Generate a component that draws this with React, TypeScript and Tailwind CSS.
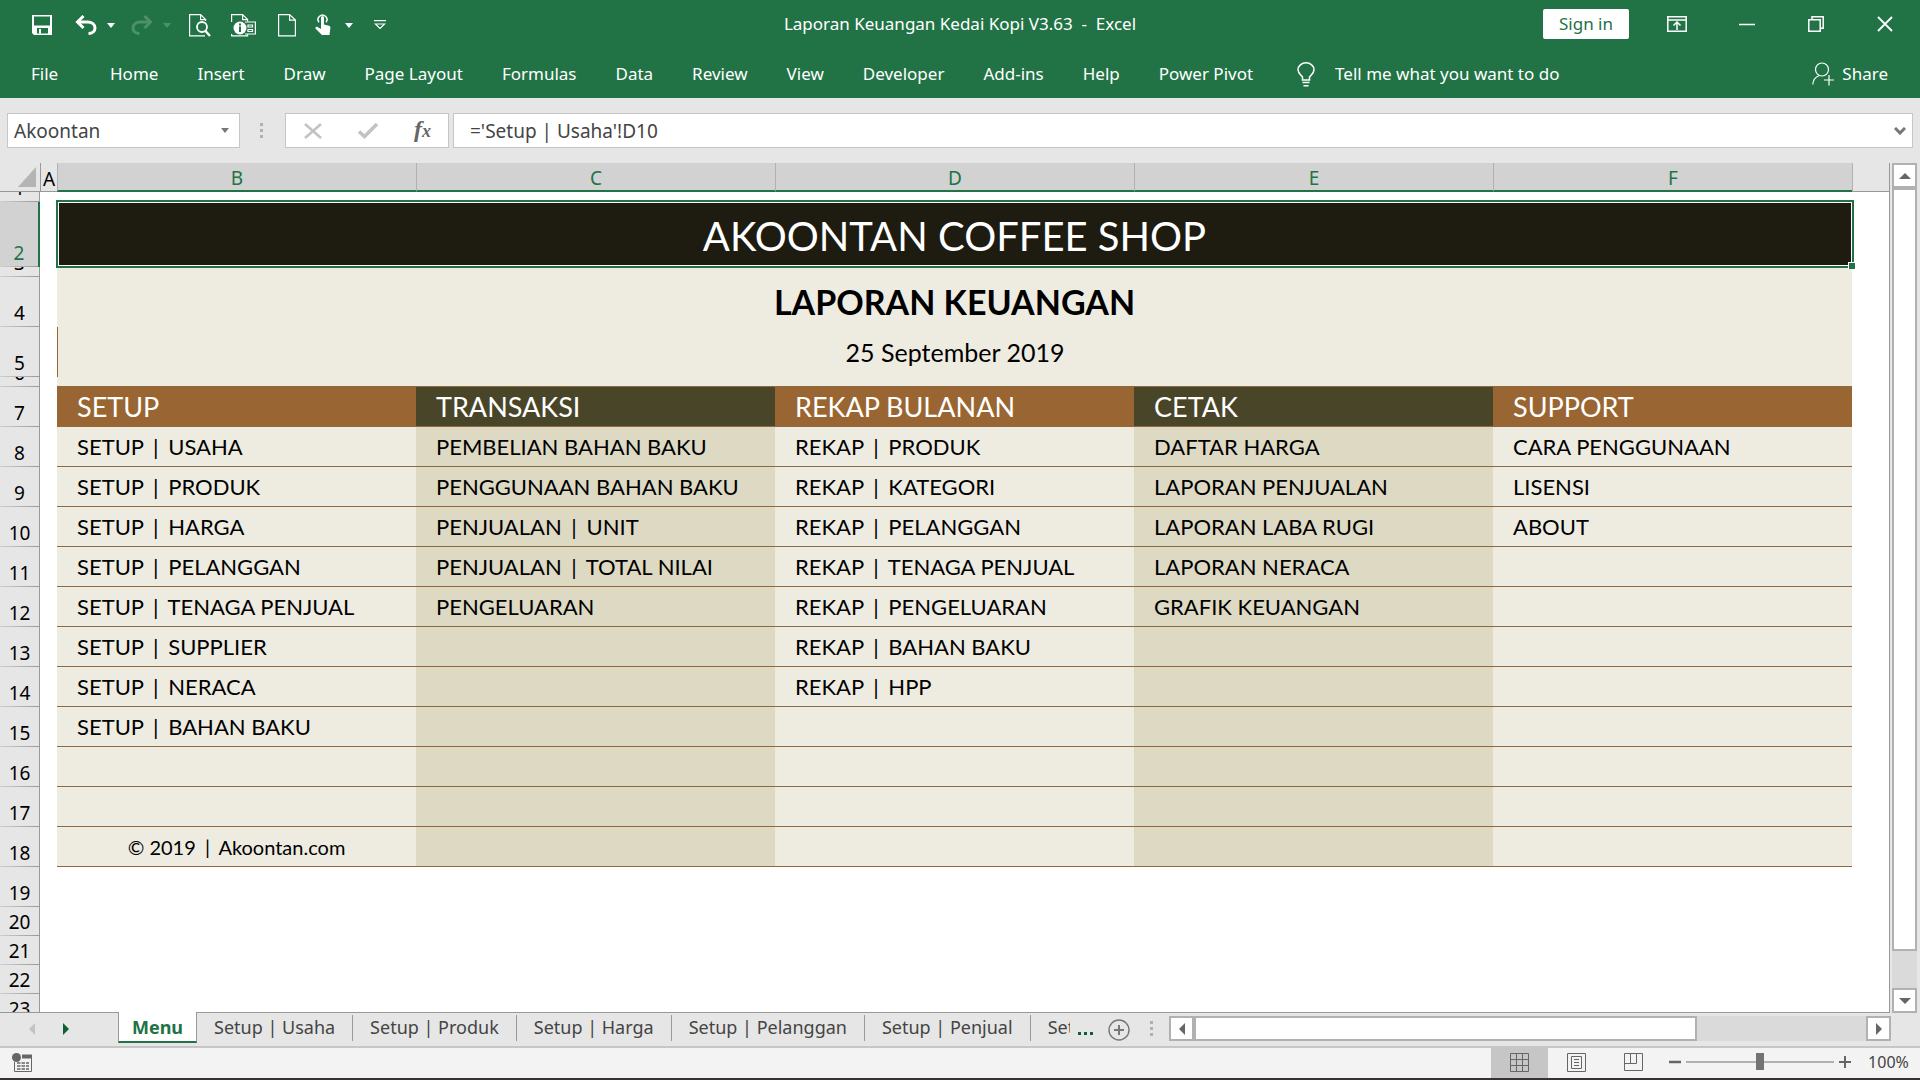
import type { ReactNode } from 'react';

const RIBBON_TABS = [
  'Home',
  'Insert',
  'Draw',
  'Page Layout',
  'Formulas',
  'Data',
  'Review',
  'View',
  'Developer',
  'Add-ins',
  'Help',
  'Power Pivot',
];

const COLUMNS = ['B', 'C', 'D', 'E', 'F'];

const MENU = [
  {
    title: 'SETUP',
    items: [
      'SETUP | USAHA',
      'SETUP | PRODUK',
      'SETUP | HARGA',
      'SETUP | PELANGGAN',
      'SETUP | TENAGA PENJUAL',
      'SETUP | SUPPLIER',
      'SETUP | NERACA',
      'SETUP | BAHAN BAKU',
    ],
  },
  {
    title: 'TRANSAKSI',
    items: [
      'PEMBELIAN BAHAN BAKU',
      'PENGGUNAAN BAHAN BAKU',
      'PENJUALAN | UNIT',
      'PENJUALAN | TOTAL NILAI',
      'PENGELUARAN',
    ],
  },
  {
    title: 'REKAP BULANAN',
    items: [
      'REKAP | PRODUK',
      'REKAP | KATEGORI',
      'REKAP | PELANGGAN',
      'REKAP | TENAGA PENJUAL',
      'REKAP | PENGELUARAN',
      'REKAP | BAHAN BAKU',
      'REKAP | HPP',
    ],
  },
  {
    title: 'CETAK',
    items: ['DAFTAR HARGA', 'LAPORAN PENJUALAN', 'LAPORAN LABA RUGI', 'LAPORAN NERACA', 'GRAFIK KEUANGAN'],
  },
  { title: 'SUPPORT', items: ['CARA PENGGUNAAN', 'LISENSI', 'ABOUT'] },
];

const MENU_ROWS = [8, 9, 10, 11, 12, 13, 14, 15, 16, 17, 18];

const SHEETS = ['Setup | Usaha', 'Setup | Produk', 'Setup | Harga', 'Setup | Pelanggan', 'Setup | Penjual'];

function Caret() {
  return (
    <svg viewBox="0 0 8 5" className="h-[5px] w-2" fill="currentColor">
      <path d="M0 0h8L4 5z" />
    </svg>
  );
}

function QuickAccess() {
  return (
    <div className="flex items-center gap-4 pt-0.5 pl-8">
      <button aria-label="Save" className="flex w-[27px]">
        <svg viewBox="0 0 20 20" className="size-5">
          <path d="M0 0h20v20H2l-2-2z" fill="currentColor" />
          <path d="M2 1.500h16v9H2z" fill="#217346" />
          <path d="M5 13h11v5.500H5z" fill="#217346" />
          <path d="M7 14h2v4.500H7z" fill="currentColor" />
        </svg>
      </button>
      <div className="flex items-center gap-2.5">
        <button aria-label="Undo">
          <svg viewBox="0 0 22 20" className="h-5 w-[22px]" fill="none" stroke="currentColor" strokeWidth="3">
            <path d="M2.500 7h10c4.500 0 7.500 2.500 7.500 6 0 3-2.500 5.500-6.500 5.500" />
            <path d="M8.500 1L2.500 7l6 6" />
          </svg>
        </button>
        <button aria-label="Undo history">
          <Caret />
        </button>
      </div>
      <div className="flex items-center gap-2.5 text-[#4d9069]">
        <button aria-label="Redo">
          <svg viewBox="0 0 22 20" className="h-5 w-[22px]" fill="none" stroke="currentColor" strokeWidth="3">
            <path d="M19.500 7h-10C5 7 2 9.500 2 13c0 3 2.500 5.500 6.500 5.500" />
            <path d="M13.500 1l6 6-6 6" />
          </svg>
        </button>
        <button aria-label="Redo history">
          <Caret />
        </button>
      </div>
      <button aria-label="Print preview" className="flex w-[25px] justify-center">
        <svg viewBox="0 0 22 23" className="h-[23px] w-[22px]" fill="none" stroke="currentColor" strokeWidth="1.200">
          <path d="M16 21.800H.600V.600h11l5 5V7M11.600.600v5h5" />
          <circle cx="13" cy="13" r="5" strokeWidth="1.800" />
          <path d="M16.500 17l4.500 5" strokeWidth="2.400" />
        </svg>
      </button>
      <button aria-label="Document info" className="flex w-[30px] justify-center">
        <svg viewBox="0 0 25 23" className="h-[23px] w-[25px]" fill="none" stroke="currentColor" strokeWidth="1.200">
          <path d="M.600 8V.600h11l5 5v2M11.600.600v5h5M.600 20v1.800h16v-1.500" />
          <path d="M14 8h10.400v12H14" />
          <path d="M17 11h4.500v2H17zM17 15.500h4.500v2H17z" />
          <circle cx="9" cy="14" r="6.500" fill="currentColor" stroke="none" />
          <path d="M9 9.500v2M9 12.500v5.500" stroke="#217346" strokeWidth="2" />
        </svg>
      </button>
      <button aria-label="New" className="flex w-[25px] justify-center">
        <svg viewBox="0 0 18 23" className="h-[23px] w-[18px]" fill="none" stroke="currentColor" strokeWidth="1.200">
          <path d="M.600.600h11l5.800 5.500v15.700H.600zM11.600.600v5.500h5.800" />
        </svg>
      </button>
      <div className="flex items-center gap-2.5">
        <button aria-label="Touch mode" className="flex w-5">
          <svg viewBox="0 0 16 22" className="h-[22px] w-4">
            <path
              d="M6 3.500a1.500 1.500 0 0 1 3 0v7l5 1.300c1 .3 1.500 1 1.400 2L14.500 21H7L.700 14.800c-1-1.200.5-2.600 1.900-1.900L6 15z"
              fill="currentColor"
            />
            <path d="M4 8.200a4.400 4.400 0 1 1 7 0" fill="none" stroke="currentColor" strokeWidth="1.500" />
          </svg>
        </button>
        <button aria-label="Touch mode options">
          <Caret />
        </button>
      </div>
      <button aria-label="Customize quick access toolbar" className="flex w-[22px] justify-center">
        <svg viewBox="0 0 12 10" className="h-2.5 w-3" fill="none" stroke="currentColor" strokeWidth="1.200">
          <path d="M0 .600h12M1.500 4h9L6 8.500z" />
        </svg>
      </button>
    </div>
  );
}

function WindowControls() {
  return (
    <div className="flex items-center justify-end">
      <button className="mr-[38px] h-[30px] w-[86px] rounded-xs bg-white text-[17px] leading-6 text-[#217346]">
        Sign in
      </button>
      <button aria-label="Ribbon display options" className="mr-[52px]">
        <svg viewBox="0 0 20 16" className="h-4 w-5" fill="none" stroke="currentColor" strokeWidth="1.500">
          <path d="M.800.800h18.400v14.400H.800zM.800 4h18.400M10 14V6.500M6.500 9.500L10 6l3.500 3.500" />
        </svg>
      </button>
      <button aria-label="Minimize" className="mr-[53px]">
        <svg viewBox="0 0 16 16" className="size-4" stroke="currentColor" strokeWidth="1.500">
          <path d="M0 8.500h16" />
        </svg>
      </button>
      <button aria-label="Restore" className="mr-[53px]">
        <svg viewBox="0 0 16 16" className="size-4" fill="none" stroke="currentColor" strokeWidth="1.500">
          <path d="M.800 3.800h11.400v11.400H.800zM4 3.500V.800h11.200v11.400h-2.700" />
        </svg>
      </button>
      <button aria-label="Close" className="mr-[27px]">
        <svg viewBox="0 0 16 16" className="size-4" stroke="currentColor" strokeWidth="1.800">
          <path d="M1 1l14 14M15 1L1 15" />
        </svg>
      </button>
    </div>
  );
}

function Ribbon() {
  return (
    <nav className="flex h-[50px] items-center pt-0.5 text-[17px] leading-6">
      <button className="w-[110px] pl-[31px] text-left">File</button>
      <div className="flex gap-[39px]">
        {RIBBON_TABS.map((tab) => (
          <button key={tab} className="whitespace-nowrap">
            {tab}
          </button>
        ))}
      </div>
      <label className="ml-11 flex items-center gap-5">
        <svg viewBox="0 0 18 25" className="h-[25px] w-[18px]" fill="none" stroke="currentColor" strokeWidth="1.500">
          <path d="M5.500 18v-3C3.500 12.500 1 11 1 7.800a8 7 0 0 1 16 0c0 3.200-2.500 4.700-4.500 7.200v3zM5.500 20.500h7M6.500 23.800h5" />
        </svg>
        <input
          aria-label="Tell me what you want to do"
          placeholder="Tell me what you want to do"
          className="w-64 bg-transparent outline-none placeholder:text-white"
        />
      </label>
      <button className="mr-8 ml-auto flex items-center gap-2">
        <svg viewBox="0 0 22 24" className="h-6 w-[22px]" fill="none" stroke="currentColor" strokeWidth="1.200">
          <ellipse cx="10" cy="7.500" rx="6.500" ry="6.500" />
          <path d="M.800 22.500C1 18 3.500 15 7 13.700M12 18h10M17 13v10.500" />
        </svg>
        Share
      </button>
    </nav>
  );
}

function Grip() {
  return (
    <div className="flex flex-col gap-[3px]">
      <span className="size-[3px] bg-[#b0b0b0]" />
      <span className="size-[3px] bg-[#b0b0b0]" />
      <span className="size-[3px] bg-[#b0b0b0]" />
    </div>
  );
}

function FormulaBar() {
  return (
    <div className="flex h-[65px] items-center bg-[#e6e6e6] px-[7px] text-[19px] leading-6 text-[#444]">
      <div className="flex h-[35px] w-[233px] items-center border border-[#c6c6c6] bg-white pr-2.5">
        <input aria-label="Name box" defaultValue="Akoontan" className="min-w-0 flex-1 pl-1.5 outline-none" />
        <button aria-label="Name list" className="text-[#777]">
          <Caret />
        </button>
      </div>
      <div className="flex w-[45px] justify-center pr-[3px]">
        <Grip />
      </div>
      <div className="flex h-[35px] w-[164px] items-center gap-9 border border-[#c6c6c6] bg-white pl-[18px]">
        <button aria-label="Cancel" className="text-[#c3c3c3]">
          <svg viewBox="0 0 18 16" className="h-4 w-[18px]" stroke="currentColor" strokeWidth="2.600">
            <path d="M1 1l16 14M17 1L1 15" />
          </svg>
        </button>
        <button aria-label="Enter" className="text-[#c3c3c3]">
          <svg viewBox="0 0 20 16" className="h-4 w-5" fill="none" stroke="currentColor" strokeWidth="3.500">
            <path d="M1 8.500l5.500 5L19 1" />
          </svg>
        </button>
        <button
          aria-label="Insert function"
          className="font-['Liberation_Serif',serif] text-2xl leading-6 font-bold text-[#666] italic"
        >
          f<span className="text-lg">x</span>
        </button>
      </div>
      <div className="ml-1 flex h-[35px] flex-1 items-center border border-[#c6c6c6] bg-white pr-1.5">
        <input
          aria-label="Formula"
          defaultValue="='Setup | Usaha'!D10"
          className="min-w-0 flex-1 pl-4 outline-none"
        />
        <button aria-label="Expand formula bar" className="text-[#777]">
          <svg viewBox="0 0 12 8" className="h-2 w-3" fill="none" stroke="currentColor" strokeWidth="3">
            <path d="M1 1l5 5 5-5" />
          </svg>
        </button>
      </div>
    </div>
  );
}

function RowHeader({ n, height, active }: { n: number; height: string; active?: boolean }) {
  return (
    <th
      scope="row"
      className={`p-0 font-normal ${
        active
          ? 'border-r-2 border-[#217346] bg-[#d2d2d2] text-[#217346]'
          : 'border-r border-[#999] bg-[#e6e6e6] text-black'
      }`}
    >
      <div className={`flex flex-col items-center justify-end overflow-hidden ${height}`}>
        <span className="flex-none font-['Noto_Sans',sans-serif] text-[19px] leading-[26px]">{n}</span>
        <span className="h-px w-full flex-none bg-linear-to-r from-[#cfcfcf] to-[#999]" />
      </div>
    </th>
  );
}

// the bar between group and page name has some air on both sides
function PipedText({ text }: { text: string }) {
  const [before, after] = text.split('|');
  if (after === undefined) return <>{text}</>;
  return (
    <>
      {before}
      <span className="mx-1">|</span>
      {after}
    </>
  );
}

function Sheet() {
  return (
    <div className="min-w-0 flex-1 overflow-hidden border-r border-b border-[#999] bg-white">
      <table className="w-full table-fixed border-separate border-spacing-0 text-left">
        <colgroup>
          <col className="w-10" />
          <col className="w-[17px]" />
          {COLUMNS.map((c) => (
            <col key={c} />
          ))}
          <col className="w-[37px]" />
        </colgroup>
        <thead>
          <tr className="h-[29px] bg-[#e6e6e6] text-center text-[19px] leading-6">
            <th className="border-b border-[#999] p-0">
              <svg viewBox="0 0 18 20" className="ml-[18px] h-5 w-[18px]" fill="#b4b4b4">
                <path d="M18 0v20H0z" />
              </svg>
            </th>
            <th scope="col" className="overflow-hidden border-b border-l border-[#999] p-0 pt-[3px] font-normal">
              A
            </th>
            {COLUMNS.map((c) => (
              <th
                key={c}
                scope="col"
                className="border-b-2 border-l border-b-[#217346] border-l-[#b1b1b1] bg-[#d2d2d2] p-0 pt-[3px] text-center font-normal text-[#217346]"
              >
                {c}
              </th>
            ))}
            <th className="border-b border-l border-b-[#999] border-l-[#b1b1b1] p-0" />
          </tr>
        </thead>
        <tbody className="font-[Lato,sans-serif]">
          <tr>
            <RowHeader n={1} height="h-2.5" />
            <td colSpan={7} />
          </tr>
          <tr>
            <RowHeader n={2} height="h-[65px]" active />
            <td />
            <td colSpan={5} className="relative bg-[#1e1c11] p-0 pt-0.5 text-center text-[40px] leading-[50px] text-white">
              AKOONTAN COFFEE SHOP
              <div className="absolute -top-0.5 -right-0.5 -bottom-px -left-px border-2 border-[#217346]">
                <div className="size-full border border-white" />
                <div className="absolute -right-[3px] -bottom-[3px] size-[7px] border-t border-l border-white bg-[#217346]" />
              </div>
            </td>
            <td />
          </tr>
          <tr>
            <RowHeader n={3} height="h-2.5" />
            <td />
            <td colSpan={5} className="bg-[#eeece1]" />
            <td />
          </tr>
          <tr>
            <RowHeader n={4} height="h-[50px]" />
            <td />
            <td colSpan={5} className="bg-[#eeece1] p-0 text-center text-[34px] leading-10 font-bold">
              LAPORAN KEUANGAN
            </td>
            <td />
          </tr>
          <tr>
            <RowHeader n={5} height="h-[50px]" />
            <td />
            <td colSpan={5} className="border-l border-[#996633] bg-[#eeece1] p-0 text-center text-[25px] leading-7">
              25 September 2019
            </td>
            <td />
          </tr>
          <tr>
            <RowHeader n={6} height="h-2.5" />
            <td />
            <td colSpan={5} className="border-b border-[#8d6a40] bg-[#eeece1]" />
            <td />
          </tr>
          <tr>
            <RowHeader n={7} height="h-10" />
            <td />
            {MENU.map((column, i) => (
              <td
                key={column.title}
                className={`border-b border-[#8d6a40] py-0 pr-0 pl-5 text-[27px] leading-8 text-white ${
                  i % 2 ? 'bg-[#494529]' : 'bg-[#996633]'
                }`}
              >
                {column.title}
              </td>
            ))}
            <td />
          </tr>
          {MENU_ROWS.map((n, row) => (
            <tr key={n}>
              <RowHeader n={n} height="h-10" />
              <td />
              {MENU.map((column, i) => (
                <td
                  key={column.title}
                  className={`border-b border-[#8d6a40] py-0 pr-0 pl-5 text-[22px] leading-7 whitespace-nowrap ${
                    i % 2 ? 'bg-[#ddd9c3]' : 'bg-[#eeece1]'
                  }`}
                >
                  {n === 18 && i === 0 ? (
                    <div className="pr-5 text-center text-xl leading-7">
                      <PipedText text="© 2019 | Akoontan.com" />
                    </div>
                  ) : (
                    column.items[row] && (
                      <a href="#menu">
                        <PipedText text={column.items[row]} />
                      </a>
                    )
                  )}
                </td>
              ))}
              <td />
            </tr>
          ))}
          <tr>
            <RowHeader n={19} height="h-10" />
            <td colSpan={7} />
          </tr>
          {[20, 21, 22, 23].map((n) => (
            <tr key={n}>
              <RowHeader n={n} height="h-[29px]" />
              <td colSpan={7} />
            </tr>
          ))}
        </tbody>
      </table>
    </div>
  );
}

function ScrollButton({ label, children }: { label: string; children: ReactNode }) {
  return (
    <button
      aria-label={label}
      className="flex size-[25px] flex-none items-center justify-center border-2 border-[#b1b1b1] bg-white text-[#666]"
    >
      {children}
    </button>
  );
}

function VerticalScroll() {
  return (
    <div className="mr-[3px] ml-0.5 flex w-[25px] flex-none flex-col bg-[#dadada]">
      <ScrollButton label="Scroll up">
        <svg viewBox="0 0 12 6" className="h-1.5 w-3" fill="currentColor">
          <path d="M0 6h12L6 0z" />
        </svg>
      </ScrollButton>
      <div className="h-[763px] border-2 border-[#b1b1b1] bg-white" />
      <div className="flex-1" />
      <ScrollButton label="Scroll down">
        <svg viewBox="0 0 12 6" className="h-1.5 w-3" fill="currentColor">
          <path d="M0 0h12L6 6z" />
        </svg>
      </ScrollButton>
    </div>
  );
}

function SheetTabs() {
  return (
    <div className="flex h-[33px] text-[18px] leading-6 text-[#444]">
      <div className="flex w-[118px] items-center gap-7 pb-0.5 pl-[29px]">
        <button aria-label="Previous sheet" className="text-[#c3c3c3]">
          <svg viewBox="0 0 6 12" className="h-3 w-1.5" fill="currentColor">
            <path d="M6 0v12L0 6z" />
          </svg>
        </button>
        <button aria-label="Next sheet" className="text-[#0e6135]">
          <svg viewBox="0 0 6 12" className="h-3 w-1.5" fill="currentColor">
            <path d="M0 0v12l6-6z" />
          </svg>
        </button>
      </div>
      {/* pulled up over the grid's bottom line so the active sheet joins it */}
      <button className="-mt-px h-[31px] w-[79px] border-x border-b-2 border-x-[#999] border-b-[#217346] bg-white font-bold text-[#217346]">
        Menu
      </button>
      {SHEETS.map((sheet) => (
        <div key={sheet} className="flex items-start pt-0.5">
          <button className="px-[17px] whitespace-nowrap">{sheet}</button>
          <span className="h-[26px] w-px bg-[#999]" />
        </div>
      ))}
      <button className="w-[39px] overflow-hidden pb-1.5 pl-[17px] text-left">Setup</button>
      <button aria-label="More sheets" className="flex w-[38px] items-center gap-[3px] pt-2 pl-2">
        <span className="size-[3px] bg-[#0e6135]" />
        <span className="size-[3px] bg-[#0e6135]" />
        <span className="size-[3px] bg-[#0e6135]" />
      </button>
      <button aria-label="New sheet">
        <svg viewBox="0 0 22 22" className="size-[22px]" fill="none" stroke="#777" strokeWidth="1.400">
          <circle cx="11" cy="11" r="10" />
          <path d="M6 11h10M11 6v10" strokeWidth="2" />
        </svg>
      </button>
      <div className="ml-auto flex w-[741px] items-center pb-0.5">
        <Grip />
        <div className="ml-4 flex flex-1 items-center bg-[#dadada]">
          <ScrollButton label="Scroll left">
            <svg viewBox="0 0 6 12" className="h-3 w-1.5" fill="currentColor">
              <path d="M6 0v12L0 6z" />
            </svg>
          </ScrollButton>
          <div className="h-[25px] w-[503px] border-2 border-[#b1b1b1] bg-white" />
          <div className="flex-1" />
          <ScrollButton label="Scroll right">
            <svg viewBox="0 0 6 12" className="h-3 w-1.5" fill="currentColor">
              <path d="M0 0v12l6-6z" />
            </svg>
          </ScrollButton>
        </div>
      </div>
      <div className="w-[29px]" />
    </div>
  );
}

function StatusBar() {
  return (
    <footer className="flex h-8 items-stretch border-t-2 border-[#c6c6c6] bg-[#f3f3f3] text-[#666]">
      <button aria-label="Record macro" className="pb-0.5 pl-3">
        <svg viewBox="0 0 20 19" className="h-[19px] w-5" fill="none" stroke="currentColor">
          <path d="M2.500 9v9.500h17V3" />
          <path d="M10 3.500h10" strokeWidth="4" />
          <path d="M5 10h12M5 13h12M5 16h12" strokeWidth="1.400" strokeDasharray="3.500 1" />
          <circle cx="4.500" cy="4.500" r="4.500" fill="currentColor" stroke="none" />
        </svg>
      </button>
      <div className="ml-auto flex">
        <button aria-label="Normal view" className="flex w-[57px] items-center justify-center bg-[#c6c6c6] pb-0.5">
          <svg viewBox="0 0 19 19" className="size-[19px]" fill="none" stroke="currentColor">
            <path d="M.500.500h18v18H.500zM6.500.500v18M12.500.500v18M.500 6.500h18M.500 12.500h18" />
          </svg>
        </button>
        <button aria-label="Page layout view" className="flex w-[57px] items-center justify-center pb-0.5">
          <svg viewBox="0 0 19 19" className="size-[19px]" fill="none" stroke="currentColor">
            <path d="M.500.500h18v18H.500zM4.500 3.500h10v12h-10zM7 6.500h5M7 9.500h5M7 12.500h5" />
          </svg>
        </button>
        <button aria-label="Page break view" className="flex w-[57px] items-center justify-center pb-0.5">
          <svg viewBox="0 0 19 18" className="h-[18px] w-[19px]" fill="none" stroke="currentColor">
            <path d="M.500.500h18v17H.500zM.500 10.500h12V.500M6.500.500v10" />
          </svg>
        </button>
      </div>
      <div className="flex items-center gap-[5px] pb-0.5 pl-[7px]">
        <button aria-label="Zoom out">
          <svg viewBox="0 0 12 12" className="size-3" stroke="currentColor" strokeWidth="2.500">
            <path d="M0 6h12" />
          </svg>
        </button>
        <input
          type="range"
          aria-label="Zoom"
          min={10}
          max={190}
          defaultValue={100}
          className="h-[18px] w-[148px] appearance-none bg-transparent [&::-webkit-slider-runnable-track]:h-0.5 [&::-webkit-slider-runnable-track]:bg-[#b1b1b1] [&::-webkit-slider-thumb]:-mt-2 [&::-webkit-slider-thumb]:h-[17px] [&::-webkit-slider-thumb]:w-2 [&::-webkit-slider-thumb]:appearance-none [&::-webkit-slider-thumb]:bg-[#737373]"
        />
        <button aria-label="Zoom in">
          <svg viewBox="0 0 12 12" className="size-3" stroke="currentColor" strokeWidth="2">
            <path d="M0 6h12M6 0v12" />
          </svg>
        </button>
      </div>
      <button className="w-[69px] pb-0.5 pl-1.5 text-base leading-6 text-[#444]">100%</button>
    </footer>
  );
}

export default function App() {
  return (
    <div className="flex h-screen flex-col overflow-hidden border-b-2 border-[#353334] bg-[#e6e6e6] font-['Noto_Sans',sans-serif]">
      <header className="flex-none bg-[#217346] text-white">
        <div className="grid h-12 grid-cols-[1fr_auto_1fr]">
          <QuickAccess />
          <h1 className="self-center text-[17px] leading-6 whitespace-pre">
            Laporan Keuangan Kedai Kopi V3.63  -  Excel
          </h1>
          <WindowControls />
        </div>
        <Ribbon />
      </header>
      <FormulaBar />
      <main className="flex min-h-0 flex-1">
        <Sheet />
        <VerticalScroll />
      </main>
      <SheetTabs />
      <StatusBar />
    </div>
  );
}
